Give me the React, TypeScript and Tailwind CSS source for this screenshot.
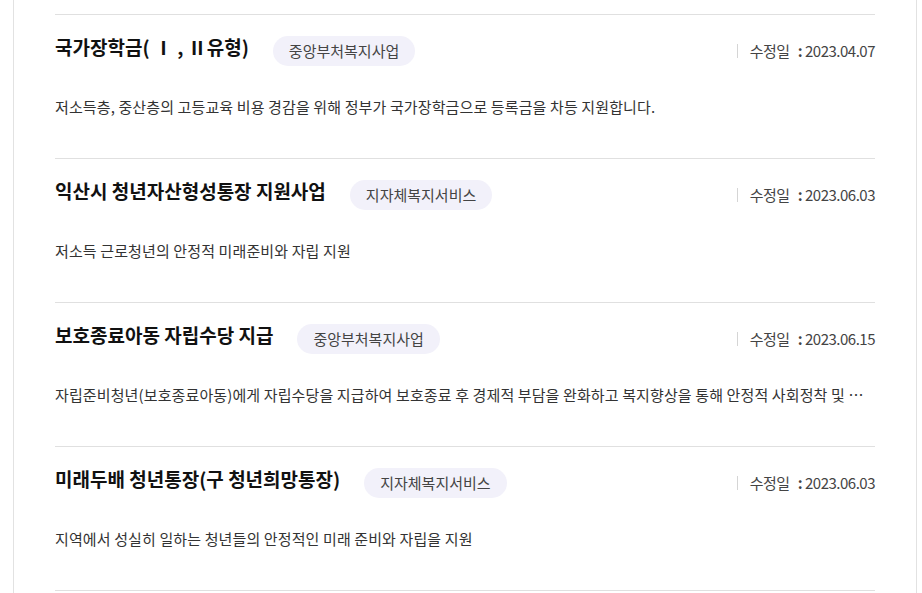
import React from 'react';

interface Welfare {
  id: number;
  title: string;
  tag: string;
  date: string;
  desc: string;
}

const items: Welfare[] = [
  {
    id: 1,
    title: '국가장학금( Ⅰ , Ⅱ유형)',
    tag: '중앙부처복지사업',
    date: '2023.04.07',
    desc: '저소득층, 중산층의 고등교육 비용 경감을 위해 정부가 국가장학금으로 등록금을 차등 지원합니다.',
  },
  {
    id: 2,
    title: '익산시 청년자산형성통장 지원사업',
    tag: '지자체복지서비스',
    date: '2023.06.03',
    desc: '저소득 근로청년의 안정적 미래준비와 자립 지원',
  },
  {
    id: 3,
    title: '보호종료아동 자립수당 지급',
    tag: '중앙부처복지사업',
    date: '2023.06.15',
    desc: '자립준비청년(보호종료아동)에게 자립수당을 지급하여 보호종료 후 경제적 부담을 완화하고 복지향상을 통해 안정적 사회정착 및 자립을 지원합니다.',
  },
  {
    id: 4,
    title: '미래두배 청년통장(구 청년희망통장)',
    tag: '지자체복지서비스',
    date: '2023.06.03',
    desc: '지역에서 성실히 일하는 청년들의 안정적인 미래 준비와 자립을 지원',
  },
];

export default function App() {
  return (
    <div
      className="min-h-[593px] bg-white"
      style={{ fontFamily: '"Noto Sans CJK KR", "Noto Sans", sans-serif' }}
    >
      <div className="ml-[13px] w-[904px] border-x border-[#e2e2e2] px-[41px] pt-[14px] min-h-[593px]">
        <ul>
          {items.map(item => (
            <li key={item.id} className="border-t border-[#e0e0e0] pt-[21px] pb-[39px] last:border-b">
              {/* title row */}
              <div className="flex items-center h-[30px]">
                <h3 className="text-[19px] font-bold text-[#111] leading-[30px] -mt-[8px]">
                  {item.title}
                </h3>
                <span className="ml-[24px] h-[30px] px-[16px] rounded-full bg-[#f2f1fa] text-[15px] text-[#444] leading-[30px]">
                  {item.tag}
                </span>
                <div className="ml-auto flex items-center text-[15px] text-[#444] tracking-[-0.5px]">
                  <span className="w-px h-[14px] bg-[#d5d5d5] mr-[12px]" />
                  <span>수정일</span>
                  <span className="ml-[8px] mr-[3px] font-bold">:</span>
                  <span>{item.date}</span>
                </div>
              </div>
              {/* description */}
              <p className="mt-[29px] text-[15px] leading-[24px] text-[#333] truncate tracking-[0.12px]">
                {item.desc}
              </p>
            </li>
          ))}
        </ul>
      </div>
    </div>
  );
}
